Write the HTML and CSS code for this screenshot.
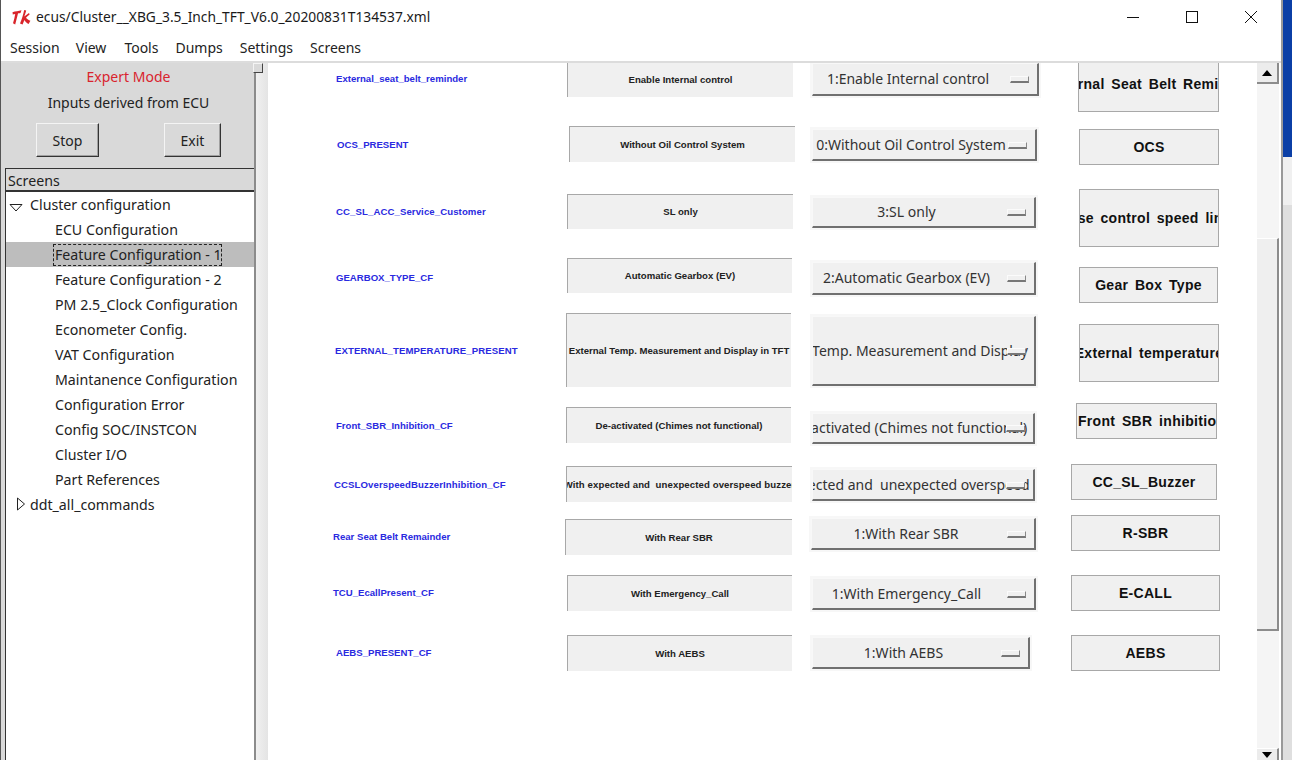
FILE: index.html
```html
<!DOCTYPE html>
<html lang="en">
<head>
<meta charset="utf-8">
<title>ecus/Cluster__XBG_3.5_Inch_TFT_V6.0_20200831T134537.xml</title>
<link rel="stylesheet" href="styles.css">
</head>
<body>
<div class="desk">
  <div class="window">
    <header class="titlebar">
      <svg class="tk" width="20" height="18" viewBox="0 0 20 18"><path d="M1.5 4.2 C4.5 3 7.5 3.2 10.5 2.2 L9.5 5 C8 5.2 7.5 5.3 7 5.5 C6.2 9 5.2 12.5 4.2 16.5 L2 15.2 C3 12 3.8 9 4.2 6 L1.8 6.6 Z" fill="#d9252b"/><path d="M13.2 2 L15.2 2.6 C14.6 5 14 6.8 13.2 8.6 C14.8 7.4 16.4 6.2 18 5 L18.6 6.4 C17 7.6 15.8 8.8 15 9.8 C16.2 11.2 17.6 12.2 19.4 12.8 L17.6 16 C15.6 15 14.4 13.6 13.4 12 L11.6 16.4 L9 15.6 C10.8 11.2 12.2 6.8 13.2 2 Z" fill="#d9252b"/></svg>
      <span class="title">ecus/Cluster__XBG_3.5_Inch_TFT_V6.0_20200831T134537.xml</span>
      <div class="controls">
        <svg class="ctl" width="46" height="14" viewBox="0 0 46 14"><path d="M17 7.5H29" stroke="#111" fill="none"/></svg>
        <svg class="ctl" width="46" height="14" viewBox="0 0 46 14"><rect x="17.5" y="1.5" width="11" height="11" stroke="#111" fill="none"/></svg>
        <svg class="ctl" width="46" height="14" viewBox="0 0 46 14"><path d="M17 1L29 13M29 1L17 13" stroke="#111" fill="none"/></svg>
      </div>
    </header>
    <nav class="menubar">
      <span class="m-session">Session</span>
      <span class="m-view">View</span>
      <span class="m-tools">Tools</span>
      <span class="m-dumps">Dumps</span>
      <span class="m-settings">Settings</span>
      <span>Screens</span>
    </nav>
    <div class="body">
      <aside class="side">
        <div class="mode">Expert Mode</div>
        <div class="inputs">Inputs derived from ECU</div>
        <div class="actions">
          <button class="tkbtn stop">Stop</button>
          <button class="tkbtn exit">Exit</button>
        </div>
        <div class="tree">
          <div class="tree-head">Screens</div>
          <div class="tree-row top"><svg class="tw tw-d" width="14" height="10" viewBox="0 0 14 10"><path d="M1 1.5H13L7 8Z" fill="none" stroke="#222"/></svg>Cluster configuration</div>
          <div class="tree-row child">ECU Configuration</div>
          <div class="tree-row child sel"><span class="focus">Feature Configuration - 1</span></div>
          <div class="tree-row child">Feature Configuration - 2</div>
          <div class="tree-row child">PM 2.5_Clock Configuration</div>
          <div class="tree-row child">Econometer Config.</div>
          <div class="tree-row child">VAT Configuration</div>
          <div class="tree-row child">Maintanence Configuration</div>
          <div class="tree-row child">Configuration Error</div>
          <div class="tree-row child">Config SOC/INSTCON</div>
          <div class="tree-row child">Cluster I/O</div>
          <div class="tree-row child">Part References</div>
          <div class="tree-row top"><svg class="tw tw-r" width="10" height="14" viewBox="0 0 10 14"><path d="M1.5 1V13L8.5 7Z" fill="none" stroke="#222"/></svg>ddt_all_commands</div>
        </div>
      </aside>
      <div class="sash"><span class="grip"></span></div>
      <main class="canvas">
        <span class="lbl l1">External_seat_belt_reminder</span>
        <div class="val v1"><span>Enable Internal control</span></div>
        <div class="combo c1"><span class="ctext">1:Enable Internal control</span><i class="ind"></i></div>
        <div class="cmd b1"><span>External Seat Belt Reminder</span></div>

        <span class="lbl l2">OCS_PRESENT</span>
        <div class="val v2"><span>Without Oil Control System</span></div>
        <div class="combo c2"><span class="ctext">0:Without Oil Control System</span><i class="ind"></i></div>
        <div class="cmd b2"><span>OCS</span></div>

        <span class="lbl l3">CC_SL_ACC_Service_Customer</span>
        <div class="val v3"><span>SL only</span></div>
        <div class="combo c3"><span class="ctext">3:SL only</span><i class="ind"></i></div>
        <div class="cmd b3"><span>Cruise control speed limiter</span></div>

        <span class="lbl l4">GEARBOX_TYPE_CF</span>
        <div class="val v4"><span>Automatic Gearbox (EV)</span></div>
        <div class="combo c4"><span class="ctext">2:Automatic Gearbox (EV)</span><i class="ind"></i></div>
        <div class="cmd b4"><span>Gear Box Type</span></div>

        <span class="lbl l5">EXTERNAL_TEMPERATURE_PRESENT</span>
        <div class="val v5"><span>External Temp. Measurement and Display in TFT</span></div>
        <div class="combo c5"><span class="ctext">1:External Temp. Measurement and Display in TFT</span><i class="ind"></i></div>
        <div class="cmd b5"><span>External temperature</span></div>

        <span class="lbl l6">Front_SBR_Inhibition_CF</span>
        <div class="val v6"><span>De-activated (Chimes not functional)</span></div>
        <div class="combo c6"><span class="ctext">0:De-activated (Chimes not functional)</span><i class="ind"></i></div>
        <div class="cmd b6"><span>Front SBR inhibition</span></div>

        <span class="lbl l7">CCSLOverspeedBuzzerInhibition_CF</span>
        <div class="val v7"><span>With expected and&nbsp; unexpected overspeed buzzer</span></div>
        <div class="combo c7"><span class="ctext">1:With expected and&nbsp; unexpected overspeed</span><i class="ind"></i></div>
        <div class="cmd b7"><span>CC_SL_Buzzer</span></div>

        <span class="lbl l8">Rear Seat Belt Remainder</span>
        <div class="val v8"><span>With Rear SBR</span></div>
        <div class="combo c8"><span class="ctext">1:With Rear SBR</span><i class="ind"></i></div>
        <div class="cmd b8"><span>R-SBR</span></div>

        <span class="lbl l9">TCU_EcallPresent_CF</span>
        <div class="val v9"><span>With Emergency_Call</span></div>
        <div class="combo c9"><span class="ctext">1:With Emergency_Call</span><i class="ind"></i></div>
        <div class="cmd b9"><span>E-CALL</span></div>

        <span class="lbl l10">AEBS_PRESENT_CF</span>
        <div class="val v10"><span>With AEBS</span></div>
        <div class="combo c10"><span class="ctext">1:With AEBS</span><i class="ind"></i></div>
        <div class="cmd b10"><span>AEBS</span></div>
      </main>
      <div class="scrollbar">
        <div class="arrow up"><svg width="10" height="6" viewBox="0 0 10 6"><path d="M5 0L10 6H0Z" fill="#000"/></svg></div>
        <div class="trough"><div class="thumb"></div></div>
        <div class="arrow down"><svg width="10" height="6" viewBox="0 0 10 6"><path d="M0 0H10L5 6Z" fill="#000"/></svg></div>
      </div>
    </div>
  </div>
  <div class="edge"><div class="edge-blue"></div><div class="edge-pale"></div><div class="edge-rest"></div></div>
</div>
</body>
</html>
```
FILE: styles.css
```css
* { box-sizing: border-box; }
html, body { margin: 0; height: 100%; overflow: hidden; background: #fff; }
body { font-family: "Noto Sans", "Open Sans", sans-serif; font-size: 14px; color: #222; }
.desk { display: flex; width: 1292px; height: 760px; }
.window { width: 1283px; height: 760px; display: flex; flex-direction: column; background: #fff; border-left: 1px solid #555; border-right: 2px solid #999; }
.titlebar { height: 33px; display: flex; align-items: center; padding-left: 10px; }
.tk { margin-right: 5px; }
.title { font-size: 13.8px; color: #1a1a1a; flex: 1; }
.controls { display: flex; gap: 13px; width: 176px; margin-right: -5px; }
.ctl { display: block; }
.menubar { height: 30px; display: flex; padding-left: 9px; align-items: center; font-size: 14px; color: #222; border-bottom: 2px solid #dcdcdc; }
.menubar span { margin-right: 17px; }
.menubar .m-session { margin-right: 16px; }
.menubar .m-view { margin-right: 18px; }
.body { flex: 1; display: flex; min-height: 0; }
.side { width: 255px; background: #d9d9d9; display: flex; flex-direction: column; align-items: stretch; padding-left: 4px; border-right: 2px solid #8c8c8c; }
.mode { text-align: center; color: #d9232e; height: 27px; line-height: 28px; margin-right: 2px; }
.inputs { text-align: center; height: 27px; line-height: 26px; margin-right: 2px; }
.actions { display: flex; justify-content: space-between; padding: 6px 33px 0 31px; height: 51px; }
.tkbtn { height: 34px; font: inherit; color: #222; background: #d9d9d9; border: 1px solid; border-color: #f4f4f4 #333 #333 #f4f4f4; box-shadow: inset -1px -1px 0 #a0a0a0; padding: 0; }
.stop { width: 63px; }
.exit { width: 57px; }
.tree { flex: 1; background: #fff; display: flex; flex-direction: column; border-left: 1px solid #333; border-top: 1px solid #333; font-size: 14.2px; }
.tree-head { height: 23px; background: #d9d9d9; border-bottom: 2px solid #333; line-height: 23px; padding-left: 2px; }
.tree-row { height: 25px; line-height: 25px; white-space: nowrap; display: flex; align-items: center; }
.top { padding-left: 24px; position: relative; }
.tw { position: absolute; }
.tw-d { left: 3px; top: 11px; }
.tw-r { left: 10px; top: 5px; }
.child { padding-left: 49px; }
.sel { background: #bdbdbd; }
.focus { border: 1px dashed #222; line-height: 20px; height: 22px; width: 169px; margin-left: -2px; padding-left: 1px; overflow: hidden; }
.sash { width: 12px; background: linear-gradient(90deg, #f0f0f0, #e4e4e4); position: relative; }
.grip { position: absolute; left: -3px; top: 0; width: 10px; height: 10px; background: #d9d9d9; border: 1px solid; border-color: #f4f4f4 #444 #444 #f4f4f4; }
.canvas { flex: 1; position: relative; overflow: hidden; background: #fff; }
.lbl { position: absolute; font: bold 9.6px/12px "Liberation Sans", sans-serif; color: #2a2ae0; white-space: nowrap; }
.l3, .l5, .l7 { letter-spacing: 0.1px; }
.val { position: absolute; background: #f0f0f0; border-top: 1px solid #a8a8a8; border-left: 1px solid #a8a8a8; display: flex; align-items: center; justify-content: center; overflow: hidden; font: bold 9.6px/12px "Liberation Sans", sans-serif; color: #222; white-space: nowrap; }
.v7 { letter-spacing: 0.1px; }
.combo { position: absolute; background: #f0f0f0; border: 1px solid; border-color: #f8f8f8 #707070 #707070 #f8f8f8; border-width: 1px 2px 2px 1px; box-shadow: 0 0 0 2px #f7f7f7; display: flex; align-items: center; justify-content: center; overflow: hidden; white-space: nowrap; font-size: 14px; color: #333; }
.ctext { margin-right: 34px; margin-bottom: 1px; flex: none; }
.c2 .ctext { margin-right: 26px; }
.c6 .ctext { margin-right: 42px; }
.c7 .ctext { margin-right: 78px; }
.c5 .ctext { margin-bottom: 0; }
.c5::after { content: ""; position: absolute; top: 0; bottom: 0; right: 0; width: 5px; background: #f0f0f0; }
.ind { position: absolute; right: 8px; top: 50%; margin-top: -3px; width: 19px; height: 7px; background: #f0f0f0; border: 1px solid; border-color: #fbfbfb #888 #777 #fbfbfb; border-bottom-width: 2px; }
.cmd { position: absolute; background: #f0f0f0; border: 1px solid #a8a8a8; display: flex; align-items: center; justify-content: center; overflow: hidden; white-space: nowrap; font: bold 14px/16px "Liberation Sans", sans-serif; letter-spacing: 0.3px; word-spacing: 2.5px; color: #111; }
.cmd span { flex: none; }
.b6 { justify-content: flex-start; padding-left: 1px; }

/* canvas origin: x 268, y 63 */
.l1 { left: 68px; top: 10px; } .l2 { left: 69px; top: 76px; } .l3 { left: 68px; top: 143px; } .l4 { left: 68px; top: 209px; } .l5 { left: 67px; top: 282px; } .l6 { left: 68px; top: 357px; } .l7 { left: 66px; top: 416px; } .l8 { left: 65px; top: 468px; } .l9 { left: 65px; top: 524px; } .l10 { left: 68px; top: 584px; }
.v1 { left: 299px; top: -1px; width: 226px; height: 35px; } .v2 { left: 301px; top: 63px; width: 226px; height: 36px; } .v3 { left: 299px; top: 131px; width: 226px; height: 35px; } .v4 { left: 299px; top: 195px; width: 225px; height: 35px; } .v5 { left: 298px; top: 250px; width: 225px; height: 74px; } .v6 { left: 298px; top: 344px; width: 225px; height: 36px; } .v7 { left: 298px; top: 403px; width: 226px; height: 36px; } .v8 { left: 297px; top: 456px; width: 227px; height: 36px; } .v9 { left: 299px; top: 512px; width: 225px; height: 36px; } .v10 { left: 299px; top: 572px; width: 225px; height: 36px; }
.c1 { left: 544px; top: 0; width: 227px; height: 33px; } .c2 { left: 544px; top: 66px; width: 225px; height: 32px; } .c3 { left: 544px; top: 134px; width: 224px; height: 31px; } .c4 { left: 544px; top: 199px; width: 224px; height: 33px; } .c5 { left: 544px; top: 253px; width: 224px; height: 70px; } .c6 { left: 544px; top: 350px; width: 223px; height: 31px; } .c7 { left: 544px; top: 406px; width: 223px; height: 32px; } .c8 { left: 543px; top: 455px; width: 225px; height: 32px; } .c9 { left: 544px; top: 515px; width: 224px; height: 32px; } .c10 { left: 544px; top: 574px; width: 218px; height: 32px; }
.b1 { left: 810px; top: -8px; width: 141px; height: 57px; } .b2 { left: 811px; top: 66px; width: 140px; height: 36px; } .b3 { left: 811px; top: 126px; width: 140px; height: 58px; } .b4 { left: 811px; top: 204px; width: 139px; height: 36px; } .b5 { left: 811px; top: 261px; width: 140px; height: 58px; } .b6 { left: 808px; top: 340px; width: 141px; height: 36px; } .b7 { left: 803px; top: 401px; width: 146px; height: 36px; } .b8 { left: 803px; top: 452px; width: 149px; height: 36px; } .b9 { left: 803px; top: 512px; width: 149px; height: 36px; } .b10 { left: 803px; top: 572px; width: 149px; height: 36px; }

.scrollbar { width: 22px; margin-right: 2px; display: flex; flex-direction: column; background: #f5f5f5; }
.arrow { height: 21px; flex: none; display: flex; align-items: center; justify-content: center; background: #ececec; border-bottom: 2px solid #8c8c8c; border-right: 2px solid #8c8c8c; }
.down { border-bottom: 0; border-top: 1px solid #fff; height: 12px; align-items: flex-start; padding-top: 3px; }
.trough { flex: 1; background: #f5f5f5; padding-top: 154px; padding-bottom: 117px; }
.thumb { height: 100%; background: #efefef; border-right: 2px solid #8c8c8c; border-bottom: 2px solid #8c8c8c; border-top: 1px solid #fff; }
.edge { width: 9px; display: flex; flex-direction: column; }
.edge-blue { height: 157px; background: #0b3fa6; }
.edge-pale { height: 48px; background: #f0f0f0; }
.edge-rest { flex: 1; background: #dfdfdf; }
```
